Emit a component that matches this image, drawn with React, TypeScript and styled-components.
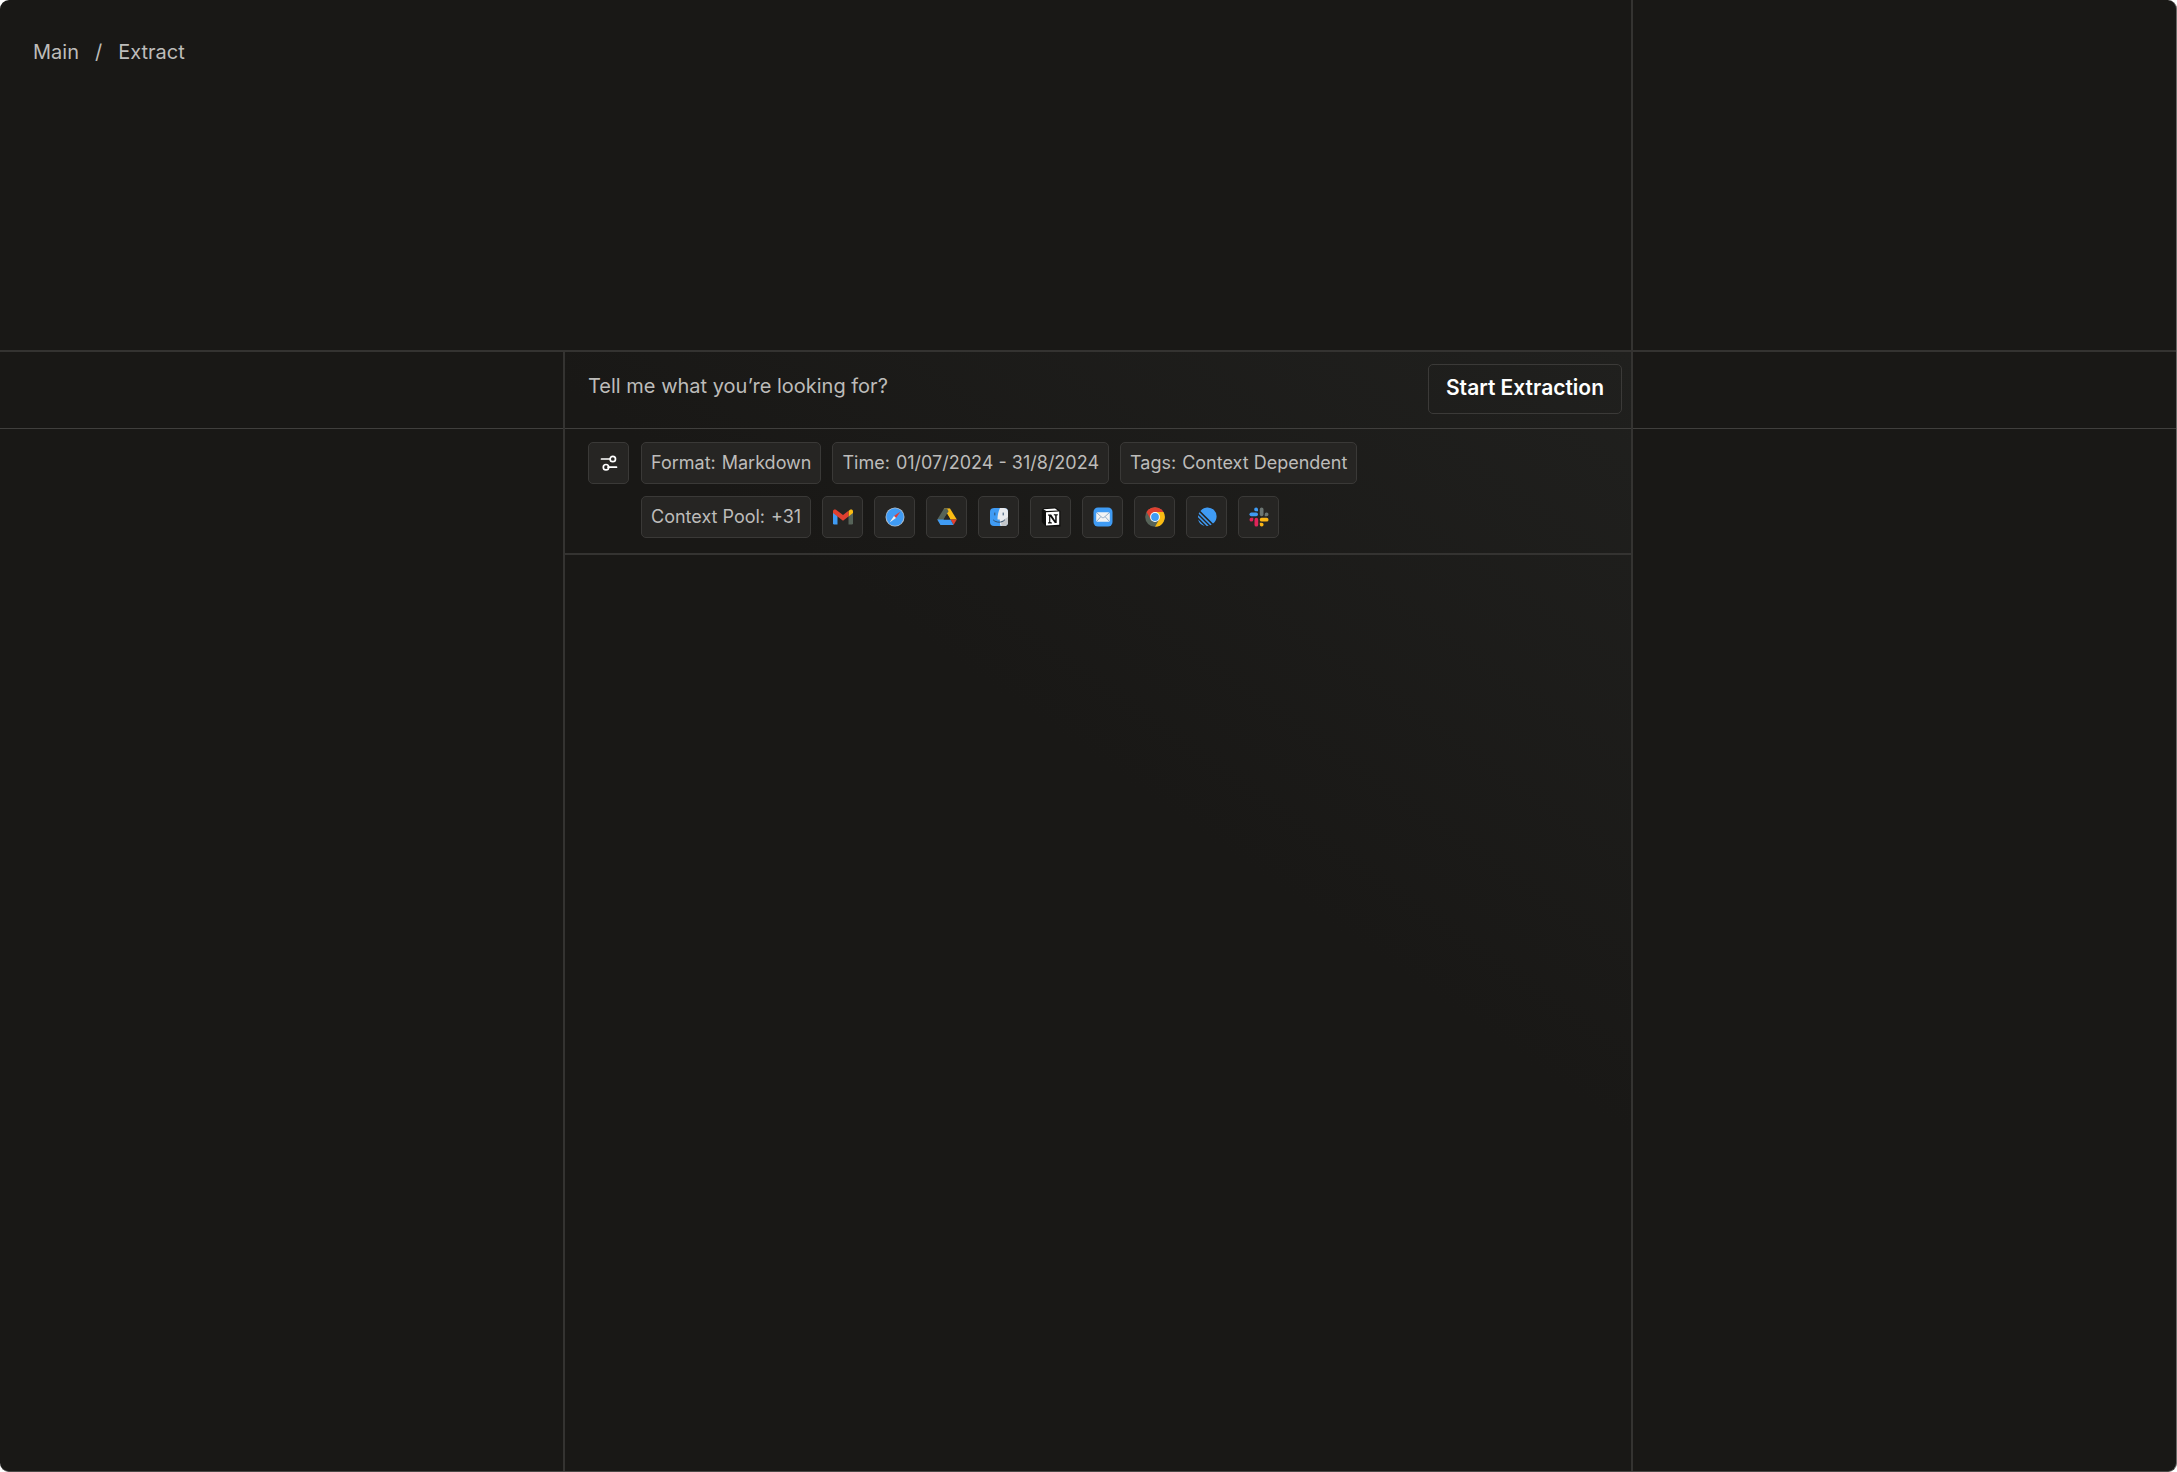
import React from "react";
import styled, { createGlobalStyle } from "styled-components";

const line = "#343331";
const hairline = "#403f3d";

const GlobalStyle = createGlobalStyle`
  *, *::before, *::after { box-sizing: border-box; }
  body { margin: 0; background: #ffffff; }
  button, input { font: inherit; color: inherit; }
`;

const Page = styled.div`
  min-height: 100vh;
  display: grid;
  grid-template-columns: 563fr 1070fr 543fr;
  grid-template-rows: 352px 1fr;
  overflow: hidden;
  border-radius: 9px;
  border-right: 1px solid #6b6a68;
  border-bottom: 1px solid #4a4947;
  background: #191816;
  color: #bdbcba;
  font-family: Inter, "Liberation Sans", sans-serif;
  font-size: 20px;
  line-height: 26px;
`;

const Header = styled.header`
  grid-column: span 2;
  padding: 39px 33px;
  border-right: 2px solid ${line};
  border-bottom: 2px solid ${line};
`;

const Corner = styled.div`
  border-bottom: 2px solid ${line};
`;

const Crumbs = styled.ol`
  display: flex;
  gap: 16px;
  margin: 0;
  padding: 0;
  list-style: none;
`;

const Crumb = styled.li`
  display: flex;
  gap: 16px;
  &:not(:first-child)::before { content: "/"; }
`;

const CrumbLink = styled.a`
  color: inherit;
  text-decoration: none;
`;

const Rail = styled.div`
  &::before {
    content: "";
    display: block;
    height: 77px;
    border-bottom: 1px solid ${hairline};
  }
`;

const Panel = styled.main`
  display: flex;
  flex-direction: column;
  border-left: 2px solid ${line};
  border-right: 2px solid ${line};
  background: linear-gradient(215deg, #20201e, #191816 42%);
`;

const Prompt = styled.form`
  display: flex;
  align-items: flex-start;
  gap: 16px;
  height: 77px;
  padding: 12px 9px 0 23px;
  border-bottom: 1px solid ${hairline};
`;

const PromptInput = styled.input`
  flex: 1;
  min-width: 0;
  height: 44px;
  padding: 0;
  border: 0;
  outline: 0;
  background: transparent;
  &::placeholder { color: inherit; opacity: 1; }
`;

const Submit = styled.button`
  height: 50px;
  padding: 0 17px 2px;
  border: 1px solid #3b3a38;
  border-radius: 5px;
  background: transparent;
  color: #ffffff;
  font-size: 21px;
  font-weight: 600;
  white-space: nowrap;
`;

const Filters = styled.section`
  display: flex;
  gap: 12px;
  padding: 13px 23px 15px;
  border-bottom: 2px solid ${line};
`;

const Rows = styled.div`
  display: flex;
  flex-direction: column;
  gap: 12px;
`;

const Row = styled.div`
  display: flex;
  flex-wrap: wrap;
  gap: 11px;
`;

const Chip = styled.button<{ $square?: boolean }>`
  display: flex;
  flex: none;
  align-items: center;
  justify-content: center;
  gap: 6px;
  width: ${(p) => (p.$square ? "41px" : "auto")};
  height: 42px;
  padding: ${(p) => (p.$square ? "0" : "0 9px")};
  border: 1px solid #3a3937;
  border-radius: 5px;
  background: #262523;
  font-size: 18px;
`;

const Glyph = styled.svg`
  display: block;
  width: 20px;
  height: 20px;
`;

const blue = "#3f9bf4";
const moss = "#566358";

const SettingsIcon = () => (
  <Glyph viewBox="0 0 20 20" fill="none" stroke="#fff" strokeWidth="1.7" strokeLinecap="round">
    <path d="M2.5 6H11M9 14.2h8.500" />
    <circle cx="13.8" cy="6" r="2.7" />
    <circle cx="7" cy="14.2" r="2.7" />
  </Glyph>
);

const GmailIcon = () => (
  <Glyph viewBox="0 0 20 20">
    <path d="M0 5.500 4.500 8.500V17.500H1.200A1.200 1.200 0 0 1 0 16.300z" fill={blue} />
    <path d="M20 5.500 15.500 8.500V17.500h3.300a1.200 1.200 0 0 0 1.200-1.200z" fill={moss} />
    <path d="M15.500 4v5.500L20 6V4.300c0-2-2-2.300-3-1.500z" fill="#fbbc13" />
    <path d="M0 4.300c0-2 2-2.300 3-1.500l7 5.200 5.500-4.200V9.500L10 13.800 4.500 9.500 0 6z" fill="#df4030" />
  </Glyph>
);

const SafariIcon = () => (
  <Glyph viewBox="0 0 20 20">
    <circle cx="10" cy="10" r="9.500" fill="#b9c2cb" />
    <circle cx="10" cy="10" r="8.700" fill={blue} />
    <path d="M15.500 4.500 11 11 9 9z" fill="#e33d33" />
    <path d="M4.500 15.500 9 9l2 2z" fill="#eceeef" />
  </Glyph>
);

const DriveIcon = () => (
  <Glyph viewBox="0 0 20 20">
    <path d="M7 1.500h6L3.700 18 0.300 12.500z" fill={moss} />
    <path d="M7 1.500h6l6.800 11h-6.300z" fill="#fbbc13" />
    <path d="M7 1.500h3L11.600 4.300 8.400 9z" fill={moss} />
    <path d="M13.500 12.500h6.300L16.500 18z" fill="#df4030" />
    <path d="M0.300 12.500h13.200L16.500 18h-13z" fill={blue} />
    <path d="m10 7 3.400 5.500H6.600z" fill="#262523" />
  </Glyph>
);

const FinderIcon = () => (
  <Glyph viewBox="0 0 20 20">
    <rect x="1" y="1" width="18" height="18" rx="4" fill={blue} />
    <path d="M11 1h4a4 4 0 0 1 4 4v10a4 4 0 0 1-4 4h-3.500c-.5-2-.7-4-.700-6.500H8.500C8.500 8 9.500 4 11 1z" fill="#e9ebee" />
    <path d="M12 14.500 19 10v5a4 4 0 0 1-4 4h-2.500z" fill="#c3c6c9" />
    <path d="M5.800 6v2M14.200 6v2M4.500 13.200c3 2.700 8 2.700 11 0" fill="none" stroke="#31506e" strokeWidth="1" strokeLinecap="round" />
  </Glyph>
);

const NotionIcon = () => (
  <Glyph viewBox="0 0 20 20">
    <path d="M0.800 3 2.500 1.200 14.500.400 19.500 4V19.500H5L.800 15z" fill="#0e0e0d" />
    <path d="M2.300 2.300 14 1.600l2.800 1.800-11.500.600z" fill="#fff" />
    <path d="M5 5.300 18.200 4.600V17.800L5 18.600z" fill="#fff" />
    <path d="M7 7.600h3.200l4 5.800V8.600l-1.400-.4v-.9h4v.9l-1.100.4V16h-1.900L9.300 9.800v5.200l1.600.5v.9H7v-.9l1.100-.5V8.700L7 8.400z" fill="#0e0e0d" />
  </Glyph>
);

const MailIcon = () => (
  <Glyph viewBox="0 0 20 20">
    <rect x=".5" y=".5" width="19" height="19" rx="4.500" fill={blue} />
    <rect x="3.200" y="5.200" width="13.600" height="9.600" rx="1.500" fill="#f2f3f4" />
    <path d="m3.800 5.800 5 4.500c.8.600 1.600.600 2.400 0l5-4.500M3.800 14.200l4-4.500M16.200 14.200l-4-4.500" fill="none" stroke="#7c9cbd" strokeWidth=".8" />
  </Glyph>
);

const ChromeIcon = () => (
  <Glyph viewBox="0 0 20 20">
    <circle cx="10" cy="10" r="9.800" fill={moss} />
    <path d="M10 5.100h8.500A9.800 9.800 0 0 1 10 19.800l4.200-7.300z" fill="#fbbc13" />
    <path d="M1.500 5.100a9.800 9.800 0 0 1 17 0H10L5.800 12.500z" fill="#df4030" />
    <circle cx="10" cy="10" r="4.900" fill="#fff" />
    <circle cx="10" cy="10" r="3.900" fill={blue} />
  </Glyph>
);

const LinearIcon = () => (
  <Glyph viewBox="0 0 20 20" fill={blue}>
    <path d="M3.400 4A9 9 0 1 1 16 16.600z" />
    <path d="m2.400 5.300 12.300 12.300-1.500.700L1.700 6.800zM1.200 8.300l10.500 10.500-2 .200L1 10.300zM1.100 12.400 7.600 18.900A9 9 0 0 1 1.100 12.400z" />
  </Glyph>
);

const SlackIcon = () => (
  <Glyph viewBox="0 0 20 20">
    <g fill={blue}>
      <rect x="0.500" y="5.500" width="8.500" height="3.700" rx="1.850" />
      <path d="M9 4.300H7.200A1.900 1.900 0 1 1 9 2.400z" />
    </g>
    <g fill="#6b7572">
      <rect x="10.800" y=".5" width="3.700" height="8.700" rx="1.850" />
      <path d="M15.700 9.200V7.400a1.900 1.900 0 1 1 1.900 1.800z" />
    </g>
    <g fill="#fbb515">
      <rect x="10.800" y="10.800" width="8.700" height="3.700" rx="1.850" />
      <path d="M10.800 15.700h1.900a1.900 1.900 0 1 1-1.900 1.900z" />
    </g>
    <g fill="#df2459">
      <rect x="5.500" y="10.800" width="3.700" height="8.700" rx="1.850" />
      <path d="M4.300 10.800v1.900a1.900 1.900 0 1 1-1.900-1.900z" />
    </g>
  </Glyph>
);

const filters = [
  { label: "Format:", value: "Markdown" },
  { label: "Time:", value: "01/07/2024 - 31/8/2024" },
  { label: "Tags:", value: "Context Dependent" },
];

const sources = [
  { name: "Gmail", Icon: GmailIcon },
  { name: "Safari", Icon: SafariIcon },
  { name: "Google Drive", Icon: DriveIcon },
  { name: "Finder", Icon: FinderIcon },
  { name: "Notion", Icon: NotionIcon },
  { name: "Mail", Icon: MailIcon },
  { name: "Chrome", Icon: ChromeIcon },
  { name: "Linear", Icon: LinearIcon },
  { name: "Slack", Icon: SlackIcon },
];

export default function App() {
  return (
    <>
      <GlobalStyle />
      <Page>
        <Header>
          <nav aria-label="Breadcrumb">
            <Crumbs>
              <Crumb><CrumbLink href="#main">Main</CrumbLink></Crumb>
              <Crumb><CrumbLink href="#extract" aria-current="page">Extract</CrumbLink></Crumb>
            </Crumbs>
          </nav>
        </Header>
        <Corner />
        <Rail />
        <Panel>
          <Prompt onSubmit={(e) => e.preventDefault()}>
            <PromptInput aria-label="Search prompt" placeholder="Tell me what you’re looking for?" />
            <Submit type="submit">Start Extraction</Submit>
          </Prompt>
          <Filters aria-label="Filters">
            <Chip type="button" $square aria-label="Filter settings"><SettingsIcon /></Chip>
            <Rows>
              <Row>
                {filters.map((f) => (
                  <Chip type="button" key={f.label}>
                    <span>{f.label}</span>
                    <span>{f.value}</span>
                  </Chip>
                ))}
              </Row>
              <Row>
                <Chip type="button">
                  <span>Context Pool:</span>
                  <span>+31</span>
                </Chip>
                {sources.map(({ name, Icon }) => (
                  <Chip type="button" $square key={name} aria-label={name}><Icon /></Chip>
                ))}
              </Row>
            </Rows>
          </Filters>
        </Panel>
        <Rail />
      </Page>
    </>
  );
}
